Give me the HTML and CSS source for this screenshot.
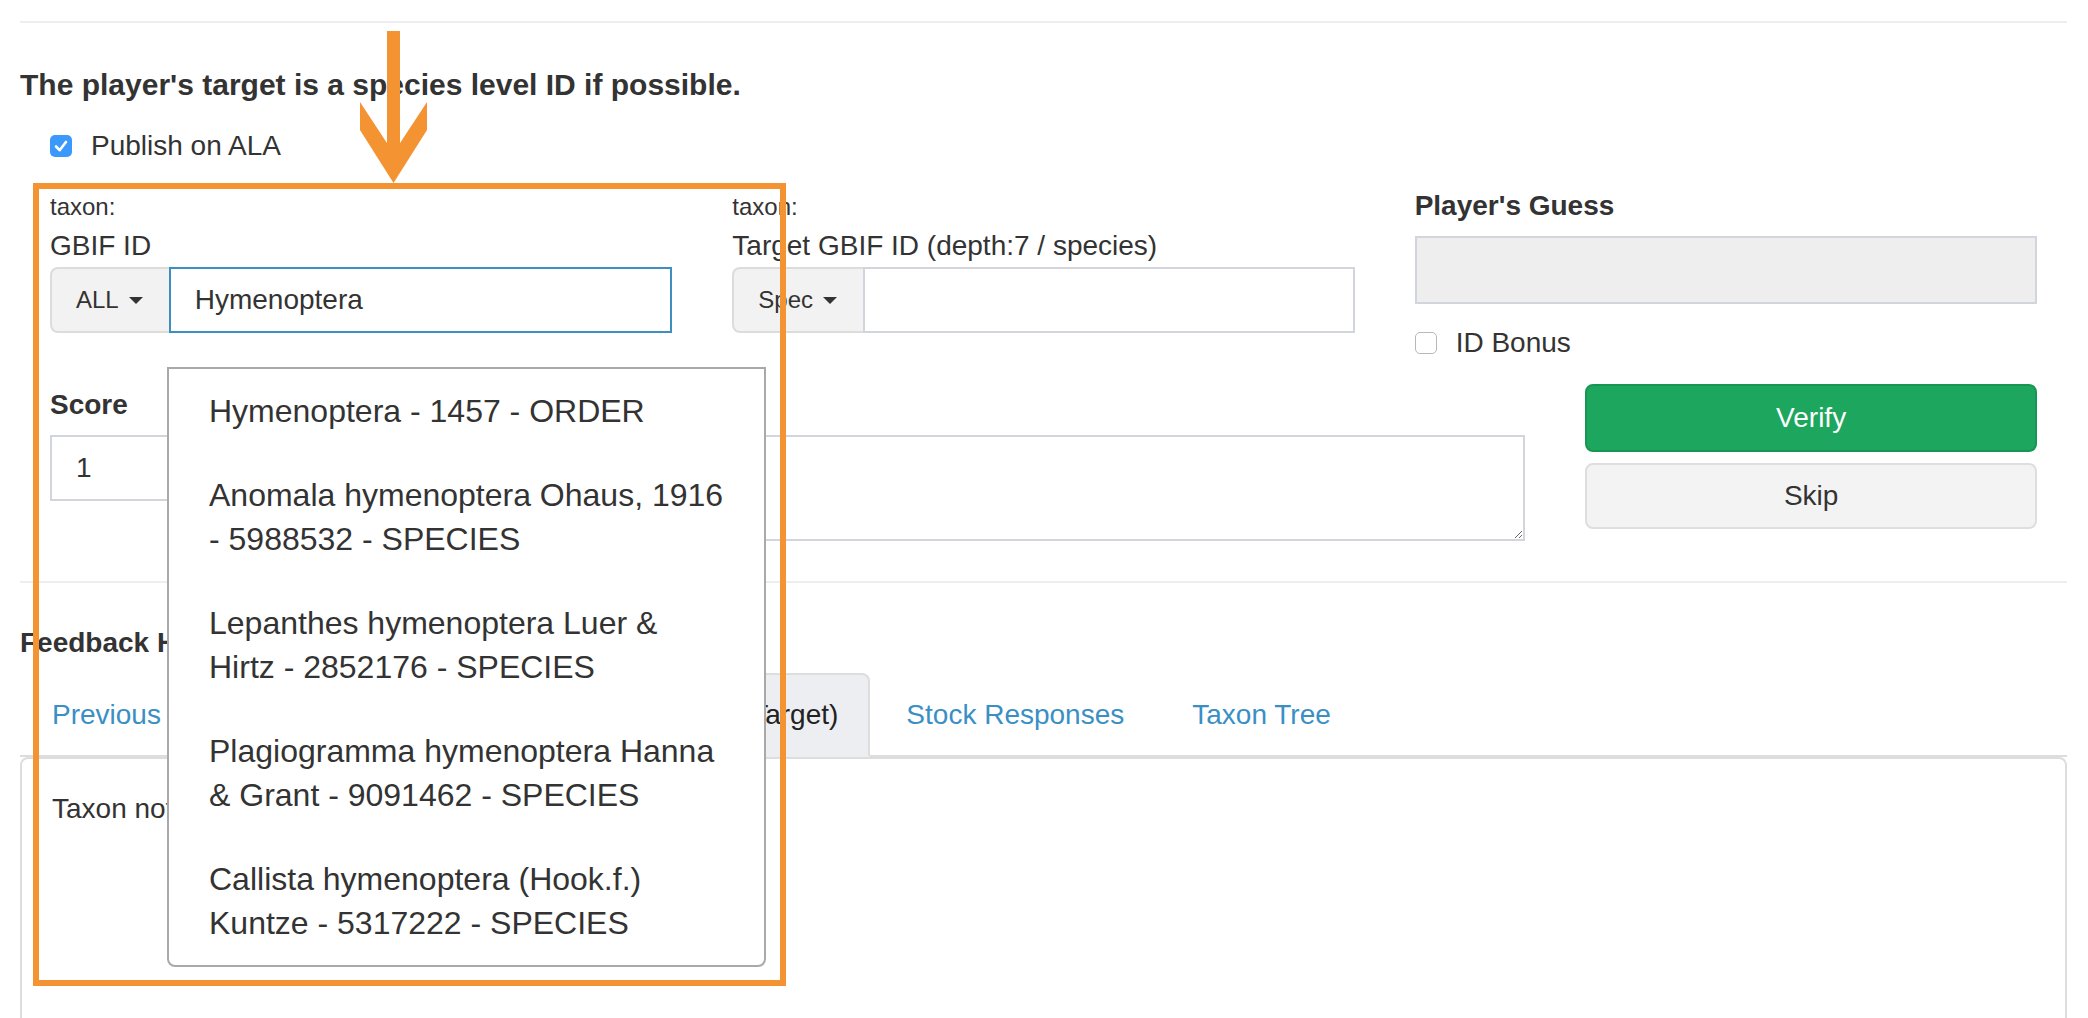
FILE: index.html
```html
<!DOCTYPE html>
<html lang="en">
<head>
<meta charset="utf-8">
<title>Verify sighting</title>
<link rel="stylesheet" href="styles.css">
</head>
<body>
<div class="page">
  <hr class="top-rule">
  <h4 class="target-note">The player's target is a species level ID if possible.</h4>
  <div class="check-row publish">
    <span class="cb cb-on"><svg viewBox="0 0 22 22" width="22" height="22"><path d="M6 11.5 L9.6 15.2 L16 7" fill="none" stroke="#fff" stroke-width="2.6" stroke-linecap="round" stroke-linejoin="round"/></svg></span>
    <span>Publish on ALA</span>
  </div>

  <div class="row row-1">
    <div class="col col-4">
      <div class="hint">taxon:</div>
      <label class="lbl">GBIF ID</label>
      <div class="input-group">
        <span class="addon">ALL<span class="caret"></span></span>
        <input class="ctl ctl-focus" type="text" value="Hymenoptera" readonly>
      </div>
    </div>
    <div class="col col-4">
      <div class="hint">taxon:</div>
      <label class="lbl">Target GBIF ID (depth:7 / species)</label>
      <div class="input-group">
        <span class="addon">Spec<span class="caret"></span></span>
        <input class="ctl" type="text" value="" readonly>
      </div>
    </div>
    <div class="col col-4">
      <div class="bold-label">Player's Guess</div>
      <div class="guess-input"></div>
      <div class="check-row bonus">
        <span class="cb cb-off"></span>
        <span>ID Bonus</span>
      </div>
    </div>
  </div>

  <div class="row row-2">
    <div class="col col-9">
      <div class="row nested">
        <div class="col col-s">
          <div class="bold-label score-label">Score</div>
          <input class="ctl score-input" type="text" value="1" readonly>
        </div>
        <div class="col col-t">
          <div class="bold-label score-label">Comment</div>
          <textarea class="comment"></textarea>
        </div>
      </div>
    </div>
    <div class="col col-3">
      <button class="btn btn-verify" type="button">Verify</button>
      <button class="btn btn-skip" type="button">Skip</button>
    </div>
  </div>

  <hr class="mid-rule">
  <div class="bold-label feedback-title">Feedback History</div>
  <ul class="tabs">
    <li><a href="#">Previous Identifications</a></li>
    <li class="active"><a href="#">Feedback Given to Player (Target)</a></li>
    <li><a href="#">Stock Responses</a></li>
    <li><a href="#">Taxon Tree</a></li>
  </ul>
  <div class="tab-panel">
    <p class="panel-text">Taxon not verified</p>
  </div>

  <ul class="suggest-menu">
    <li>Hymenoptera - 1457 - ORDER</li>
    <li>Anomala hymenoptera Ohaus, 1916 - 5988532 - SPECIES</li>
    <li>Lepanthes hymenoptera Luer &amp; Hirtz - 2852176 - SPECIES</li>
    <li>Plagiogramma hymenoptera Hanna &amp; Grant - 9091462 - SPECIES</li>
    <li>Callista hymenoptera (Hook.f.) Kuntze - 5317222 - SPECIES</li>
  </ul>

  <div class="highlight-box"></div>
  <svg class="pointer-arrow" viewBox="0 0 90 165" width="90" height="165">
    <rect x="37" y="6" width="13" height="136" fill="#f39332"/>
    <polygon points="10,77 43.5,128 77,77 77,105 43.5,158 10,105" fill="#f39332"/>
  </svg>
</div>
</body>
</html>
```

FILE: styles.css
```css
html, body {
  margin: 0;
  padding: 0;
  overflow: hidden;
  background: #fff;
}

body {
  font-family: "Liberation Sans", Arial, sans-serif;
  font-size: 28px;
  line-height: 40px;
  color: #333;
}

.page {
  position: relative;
  width: 2088px;
  height: 1018px;
  box-sizing: border-box;
  padding: 21px 21px 0 20px;
  overflow: hidden;
}

.top-rule,
.mid-rule {
  border: 0;
  border-top: 2px solid #eee;
  height: 0;
  margin: 0;
}

.target-note {
  margin: 42px 0 0;
  font-size: 30px;
  line-height: 40px;
  font-weight: bold;
}

.check-row {
  display: flex;
  align-items: center;
  height: 40px;
}

.publish {
  margin-top: 21px;
  padding-left: 30px;
  gap: 19px;
}

.cb {
  width: 22px;
  height: 22px;
  box-sizing: border-box;
  border-radius: 5px;
  flex: none;
  display: block;
}

.cb svg {
  display: block;
}

.cb-on {
  background: #3b99fc;
}

.cb-off {
  background: #fff;
  border: 1.5px solid #b8b8b8;
}

.row {
  display: flex;
}

.col {
  box-sizing: border-box;
  padding: 0 30px;
}

.col-4 {
  width: 33.3333%;
}

.col-9 {
  width: 75%;
}

.col-3 {
  width: 25%;
}

.nested {
  margin: 0 -30px;
}

.col-s {
  width: 25%;
}

.col-t {
  width: 75%;
}

.row-1 {
  margin-top: 20px;
}

.hint {
  font-size: 24px;
  line-height: 34px;
  margin-top: 4px;
}

.lbl {
  display: block;
  margin-top: 2px;
  line-height: 40px;
  white-space: nowrap;
}

.input-group {
  display: flex;
  margin-top: 1px;
  height: 66px;
}

.addon {
  display: flex;
  align-items: center;
  box-sizing: border-box;
  height: 66px;
  padding: 0 26px 0 24px;
  background: #f2f2f2;
  border: 2px solid #dcdcdc;
  border-right: 0;
  border-radius: 8px 0 0 8px;
  font-size: 24px;
  color: #333;
  white-space: nowrap;
}

.caret {
  display: inline-block;
  width: 0;
  height: 0;
  margin-left: 10px;
  border-top: 7px solid #333;
  border-left: 7px solid transparent;
  border-right: 7px solid transparent;
}

.ctl {
  box-sizing: border-box;
  height: 66px;
  margin: 0;
  padding: 0 24px;
  border: 2px solid #d2d5dd;
  border-radius: 0;
  background: #fff;
  font-family: "Liberation Sans", Arial, sans-serif;
  font-size: 28px;
  color: #333;
  outline: none;
}

.input-group .ctl {
  flex: 1;
  min-width: 0;
}

.ctl-focus {
  border-color: #3e8ec1;
}

.bold-label {
  font-weight: bold;
  line-height: 40px;
  white-space: nowrap;
}

.guess-input {
  margin-top: 10px;
  height: 68px;
  box-sizing: border-box;
  background: #eee;
  border: 2px solid #d2d5dd;
}

.bonus {
  margin-top: 19px;
  gap: 19px;
}

.row-2 {
  margin-top: 21px;
}

.score-label {
  margin-top: 1px;
}

.score-input {
  display: block;
  width: 100%;
  margin-top: 10px;
}

.comment {
  display: block;
  box-sizing: border-box;
  width: 100%;
  height: 106px;
  margin: 10px 0 0;
  border: 2px solid #d2d5dd;
  border-radius: 0;
  font-family: "Liberation Sans", Arial, sans-serif;
  font-size: 28px;
  resize: both;
}

.btn {
  display: block;
  width: 100%;
  box-sizing: border-box;
  border-radius: 8px;
  font-family: "Liberation Sans", Arial, sans-serif;
  font-size: 28px;
  line-height: 40px;
  text-align: center;
  padding: 0;
  cursor: pointer;
}

.btn-verify {
  height: 68px;
  background: #1ca65e;
  border: 2px solid #189553;
  color: #fff;
}

.btn-skip {
  margin-top: 11px;
  height: 66px;
  background: #f3f3f3;
  border: 2px solid #dedede;
  color: #333;
}

.mid-rule {
  margin-top: 40px;
}

.feedback-title {
  margin-top: 40px;
}

.tabs {
  display: flex;
  list-style: none;
  margin: 10px 0 0;
  padding: 0;
  border-bottom: 2px solid #ddd;
}

.tabs li {
  margin: 0 4px -2px 0;
}

.tabs li:first-child {
  margin-right: 8px;
}

.tabs a {
  display: block;
  padding: 20px 30px;
  border: 2px solid transparent;
  border-radius: 8px 8px 0 0;
  color: #3a8fc4;
  text-decoration: none;
  line-height: 40px;
  white-space: nowrap;
}

.tabs .active a {
  background: #eceef2;
  border-color: #ddd;
  border-bottom-color: transparent;
  color: #222;
}

.tab-panel {
  box-sizing: border-box;
  height: 400px;
  padding: 30px;
  border: 2px solid #ddd;
  border-radius: 8px 8px 0 0;
}

.panel-text {
  margin: 0;
  line-height: 40px;
}

.suggest-menu {
  position: absolute;
  left: 167px;
  top: 367px;
  width: 599px;
  box-sizing: border-box;
  margin: 0;
  padding: 0;
  list-style: none;
  background: #fff;
  border: 2px solid #a9a9a9;
  border-radius: 0 0 8px 8px;
  font-size: 32px;
  line-height: 44px;
  color: #333;
}

.suggest-menu li {
  padding: 20px 37px 20px 40px;
}

.highlight-box {
  position: absolute;
  left: 33px;
  top: 183px;
  width: 753px;
  height: 803px;
  box-sizing: border-box;
  border: 6px solid #f39332;
  pointer-events: none;
}

.pointer-arrow {
  position: absolute;
  left: 350px;
  top: 25px;
  display: block;
}
```
